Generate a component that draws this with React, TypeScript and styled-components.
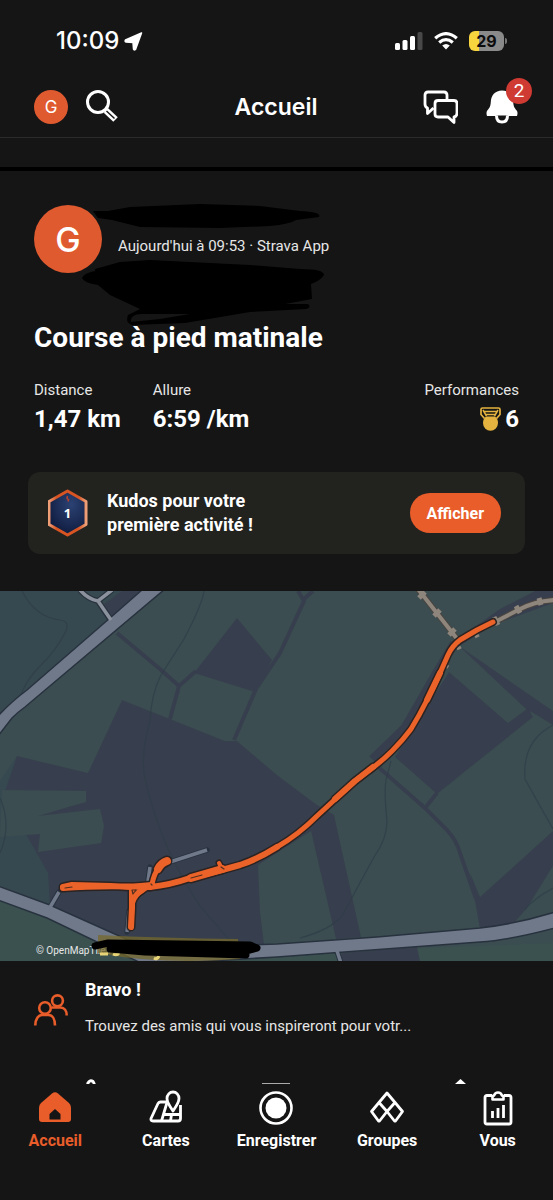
import React from 'react';
import styled, { createGlobalStyle } from 'styled-components';

const c = {
  bg: '#151515',
  black: '#000',
  white: '#fff',
  soft: '#e6e6e6',
  orange: '#e85d2a',
  avatar: '#e05a30',
  card: '#22221f',
  red: '#cf3a33',
  gold: '#e3b23f',
  field: '#3b4d50',
  fieldBlue: '#374950',
  land: '#373f4e',
  road: '#6f798a',
  casing: '#28323f',
  trail: '#8e867d',
};

const GlobalStyle = createGlobalStyle`
  *, *::before, *::after { box-sizing: border-box; }
  body { margin: 0; background: ${c.bg}; color: ${c.white}; font-family: Roboto, "Liberation Sans", sans-serif; }
  h1, h2, h3, p, dl, dt, dd { margin: 0; font-weight: inherit; font-size: inherit; }
  button { font: inherit; color: inherit; background: none; border: 0; padding: 0; cursor: pointer; }
  a { color: inherit; text-decoration: none; }
  svg { display: block; flex: none; }
`;

const Page = styled.div`
  min-height: 100vh;
  display: flex;
  flex-direction: column;
  background: ${c.bg};
`;

const StatusBar = styled.div`
  display: flex;
  align-items: center;
  justify-content: space-between;
  height: 82px;
  padding: 0 46px 0 56px;
  font-family: Inter, sans-serif;
`;

const Clock = styled.div`
  display: flex;
  align-items: center;
  gap: 5px;
  font-size: 24px;
  line-height: 32px;
  font-weight: 500;
`;

const Indicators = styled.div`
  display: flex;
  align-items: center;
  gap: 11px;
`;

const Battery = styled.div`
  position: relative;
  display: flex;
  align-items: center;
  justify-content: center;
  width: 35px;
  height: 20px;
  margin-right: 3px;
  border-radius: 6px;
  background: linear-gradient(to right, #f6d53f 30%, #8a8a8a 30%);
  color: #0c0c0c;
  font-size: 16px;
  line-height: 20px;
  font-weight: 700;
  &::after {
    content: '';
    position: absolute;
    right: -3px;
    top: 7px;
    width: 2px;
    height: 6px;
    border-radius: 0 2px 2px 0;
    background: #777;
  }
`;

const TopBar = styled.header`
  display: grid;
  grid-template-columns: 1fr auto 1fr;
  align-items: center;
  height: 56px;
  padding: 0 35px 6px 34px;
  border-bottom: 1px solid #2b2b2b;
`;

const BarSide = styled.div<{ $end?: boolean; $gap: number }>`
  display: flex;
  align-items: center;
  justify-content: ${(p) => (p.$end ? 'flex-end' : 'flex-start')};
  gap: ${(p) => p.$gap}px;
`;

const BarTitle = styled.h1`
  font-family: Inter, sans-serif;
  font-size: 23px;
  line-height: 32px;
  font-weight: 600;
`;

const Avatar = styled.span<{ $size: number; $font: number; $weight: number }>`
  display: flex;
  align-items: center;
  justify-content: center;
  flex: none;
  width: ${(p) => p.$size}px;
  height: ${(p) => p.$size}px;
  border-radius: 50%;
  background: ${c.avatar};
  font-family: Inter, sans-serif;
  font-size: ${(p) => p.$font}px;
  font-weight: ${(p) => p.$weight};
`;

const IconButton = styled.button`
  position: relative;
  display: flex;
`;

const Badge = styled.span`
  position: absolute;
  top: -12px;
  right: -14px;
  width: 26px;
  height: 26px;
  border-radius: 50%;
  background: ${c.red};
  font-size: 19px;
  line-height: 26px;
  text-align: center;
`;

const Divider = styled.div`
  margin-top: 29px;
  height: 4px;
  background: ${c.black};
`;

const Post = styled.article`
  position: relative;
  display: flex;
  flex-direction: column;
`;

const Author = styled.div`
  display: flex;
  align-items: center;
  gap: 16px;
  padding: 34px 34px 0;
`;

const Meta = styled.p`
  padding-top: 13px;
  color: ${c.soft};
  font-size: 15px;
  line-height: 20px;
`;

const Ink = styled.svg`
  position: absolute;
  top: 0;
  left: 0;
  pointer-events: none;
`;

const Title = styled.h2`
  position: relative;
  z-index: 1;
  margin: 47px 34px 0;
  font-size: 28px;
  line-height: 36px;
  font-weight: 700;
`;

const Stats = styled.dl`
  display: flex;
  gap: 32px;
  margin: 24px 34px 0;
`;

const Stat = styled.div<{ $end?: boolean }>`
  display: flex;
  flex-direction: column;
  gap: 3px;
  align-items: ${(p) => (p.$end ? 'flex-end' : 'flex-start')};
  margin-left: ${(p) => (p.$end ? 'auto' : '0')};
`;

const StatLabel = styled.dt`
  color: ${c.soft};
  font-size: 15px;
  line-height: 20px;
`;

const StatValue = styled.dd`
  display: flex;
  align-items: center;
  gap: 4px;
  font-size: 24px;
  line-height: 32px;
  font-weight: 700;
`;

const Kudos = styled.section`
  display: flex;
  align-items: center;
  gap: 18px;
  min-height: 82px;
  margin: 37px 28px;
  padding: 0 24px 0 20px;
  border-radius: 12px;
  background: ${c.card};
`;

const KudosText = styled.p`
  flex: 1;
  max-width: 180px;
  font-size: 18px;
  line-height: 24px;
  font-weight: 700;
`;

const Pill = styled.button`
  && {
    margin-left: auto;
    height: 40px;
    padding: 0 17px;
    border-radius: 20px;
    background: ${c.orange};
    font-size: 16px;
    font-weight: 700;
  }
`;

const MapFrame = styled.figure`
  position: relative;
  height: 370px;
  margin: 0;
  overflow: hidden;
  background: ${c.field};
`;

const Credit = styled.figcaption`
  position: absolute;
  left: 36px;
  bottom: 2px;
  color: #e8e8e8;
  font-size: 10px;
  line-height: 16px;
`;

const Invite = styled.section`
  display: flex;
  gap: 17px;
  padding: 18px 34px 0;
`;

const InviteIcon = styled.div`
  padding-top: 15px;
`;

const InviteText = styled.div`
  display: flex;
  flex-direction: column;
  gap: 14px;
  min-width: 0;
  font-size: 15px;
  line-height: 22px;
`;

const InviteTitle = styled.h3`
  font-weight: 700;
  font-size: 18px;
`;

const InviteBody = styled.p`
  color: ${c.soft};
`;

const Actions = styled.div`
  display: grid;
  grid-template-columns: repeat(3, 1fr);
  justify-items: center;
  height: 5px;
  margin-top: 42px;
  overflow: hidden;
`;

const TabBar = styled.nav`
  display: grid;
  grid-template-columns: repeat(5, 1fr);
  flex: 1;
  min-height: 117px;
  padding-top: 6px;
`;

const Tab = styled.a<{ $active?: boolean }>`
  display: flex;
  flex-direction: column;
  align-items: center;
  gap: 5px;
  && { color: ${(p) => (p.$active ? c.orange : c.white)}; }
  font-size: 16px;
  line-height: 20px;
  font-weight: 700;
`;

const Search = () => (
  <svg width="34" height="34" viewBox="0 0 34 34" fill="none" stroke="#fff" strokeWidth="3" aria-hidden>
    <circle cx="12" cy="12" r="10.5" />
    <path d="M20 20.500 L29.500 29.500" strokeWidth="6.500" />
    <path d="M20 20.500 L29 29" strokeWidth="4" strokeLinejoin="round" />
    <path d="M20.500 21 L28.500 28.500" stroke={c.bg} strokeWidth="1.400" />
  </svg>
);

const Chat = () => (
  <svg width="35" height="34" viewBox="0 0 35 34" fill="none" stroke="#fff" strokeWidth="2.800" strokeLinejoin="round" aria-hidden>
    <path d="M24 9.500 V5 Q24 2 21 2 H5 Q2 2 2 5 V14 Q2 17 4.500 18 V23.500 L10.500 18" />
    <path d="M15 10.500 H31 Q34 10.500 34 13.500 V23 Q34 26.500 31 27 V32.500 L25 27 H15 Q12 27 12 24 V13.500 Q12 10.500 15 10.500 Z" />
  </svg>
);

const Bell = () => (
  <svg width="32" height="34" viewBox="0 0 32 34" aria-hidden>
    <path d="M16 0.500 C9 0.500 5 5.500 4.800 12 C4.500 17 3 18.500 1 21 Q0 23 1 26 H31 Q32 23 31 21 C29 18.500 27.500 17 27.200 12 C27 5.500 23 0.500 16 0.500 Z" fill="#fff" />
    <path d="M10.500 25.500 C10.500 30 13 32 16 32 C19 32 21.500 30 21.500 25.500" fill="#151515" stroke="#fff" strokeWidth="3" />
  </svg>
);

const Medal = () => (
  <svg width="21" height="24" viewBox="0 0 21 24" fill="none" stroke={c.gold} aria-hidden>
    <path d="M4.500 11.500 L1 7.500 V2.500 Q1 1 2.500 1 H18.500 Q20 1 20 2.500 V7.500 L16.500 11.500" strokeWidth="1.700" />
    <path d="M3 3 L6.500 9 M18 3 L14.500 9 M4 4.500 H17 M6 7.500 H15" strokeWidth="1.500" />
    <path d="M6 9.500 H15 C17 11 18 13 18 16 A7.500 7.800 0 0 1 3 16 C3 13 4 11 6 9.500 Z" fill={c.gold} stroke="none" />
  </svg>
);

const HexBadge = () => (
  <svg width="41" height="48" viewBox="0 0 41 48" role="img" aria-label="1">
    <defs>
      <linearGradient id="hexRim" x1="0" x2="1" y1="0" y2="0">
        <stop offset="0" stopColor="#f0a078" />
        <stop offset=".2" stopColor="#d85523" />
        <stop offset=".8" stopColor="#d85523" />
        <stop offset="1" stopColor="#f0a078" />
      </linearGradient>
      <radialGradient id="hexFill" cx=".6" cy=".3" r=".7">
        <stop offset="0" stopColor="#2b4273" />
        <stop offset="1" stopColor="#101c40" />
      </radialGradient>
    </defs>
    <path d="M19.500 2 L38 12.500 V35.500 L19.500 46 L1 35.500 V12.500 Z" fill="url(#hexFill)" stroke="url(#hexRim)" strokeWidth="3" strokeLinejoin="round" />
    <path d="M19.500 7 L19 9.500 L20.500 10.500 L20 12.500" fill="none" stroke="#b8402b" strokeWidth="1.500" />
    <text x="19.500" y="29" fill="#fff" fontSize="13" fontWeight="700" textAnchor="middle" fontFamily="Noto Sans, sans-serif">1</text>
  </svg>
);

const Friends = () => (
  <svg width="34" height="32" viewBox="0 0 34 32" fill="none" stroke={c.orange} strokeWidth="2.600" aria-hidden>
    <circle cx="11" cy="14" r="5.800" />
    <path d="M1.300 31.500 C1.300 25 4.500 21 8 21 H14.500 C18.500 21 21 25 21 31.500" />
    <circle cx="23.500" cy="6.800" r="5.400" />
    <path d="M17.500 13.500 H26.500 C30.500 13.500 32.700 17 32.700 21.500" />
  </svg>
);

const Landscape = () => (
  <svg width="100%" height="370" viewBox="0 0 553 370" preserveAspectRatio="xMidYMid slice" role="img" aria-label="Parcours">
    <rect width="553" height="370" fill={c.field} />
    <path d="M0 0 H143 L27 99 L0 124 Z" fill={c.fieldBlue} />
    <path d="M0 190 L17 165 L60 178 L50 315 L0 300 Z" fill={c.fieldBlue} />
    <g fill={c.land}>
      <path d="M100 16 L122 0 H146 L110 28 Z" />
      <path d="M122 109 L170 128 L225 150 L237 150 L277 184 L317 214 L334 224 L361 346 L336 348 L311 240 L258 274 L260 320 L264 354 L140 354 L50 315 L48 282 L27 245 L5 200 L17 165 L88 182 Z" />
      <path d="M237 27 L272 69 L255 101 L194 82 Z" />
      <path d="M449 81 L508 132 L528 117 L533 126 L437 203 L395 166 Z" />
      <path d="M480 306 L553 240 V275 L527 317 L514 332 L480 338 L470 282 Z" />
      <path d="M452 52 L500 18 L535 0 H553 V12 L493 34 L458 56 Z" />
      <path d="M459 55 L553 120 V134 L525 117 Z" />
    </g>
    <g fill="none" stroke={c.land} strokeWidth="4">
      <path d="M117 42 L160 78 L179 95 L170 128 M179 95 L196 80 M256 98 L234 149 M256 98 L280 62 L304 10 L298 0 M304 8 L313 0" />
      <path d="M376 174 L425 217 L437 202 M425 217 L447 239 Q457 250 460 262 L476 308" />
      <path d="M454 52 L436 82 L405 136 L372 168" strokeWidth="8" />
    </g>
    <path d="M2 199 L86 200 V211 L68 216 L38 225 L100 218 L104 235 L101 252 L38 261 L40 243 L0 246 Z" fill={c.field} />
    <g fill="none" stroke="#2f3d48" strokeWidth="1.200" opacity=".7">
      <path d="M22 0 Q35 26 60 29 Q70 30 66 40 Q56 60 40 75 Q26 89 20 106" />
      <path d="M204 0 Q202 14 184 48 L161 84 Q151 104 150 130 Q140 165 145 188 Q150 210 160 238 Q172 272 200 315 L232 352" />
      <path d="M386 189 Q384 200 387 230 Q387 248 374 266 L342 325 Q330 339 300 347 M391 170 L386 189" />
      <path d="M553 134 Q522 150 525 188 L540 215 L553 238 M0 207 Q12 234 0 262 M525 318 Q535 307 553 297" />
    </g>
    <path d="M0 305 L135 368 L553 352 V370 H0 Z" fill="#3a5150" />
    <path d="M342 362 L417 356 L420 370 H337 Z" fill={c.land} />

    <g fill="none" strokeLinejoin="round">
      <path d="M80 -1 Q88 8 98 10 L112 -1 M98 10 L112 31" stroke={c.casing} strokeWidth="6" />
      <path d="M59 301 L48 320 M170 271 L207 259 M150 276 L148 290 M129 320 L127 341 M337 360 L341 372" stroke={c.casing} strokeWidth="5.500" strokeLinecap="round" />
    </g>
    <g fill={c.road} stroke={c.casing} strokeWidth="1.500">
      <path d="M143 -2 L110 27 L27 99 Q12 110 -2 125 V145 L12 127 Q18 121 25 116 L165 -2 Z" />
      <path d="M-2 295 L50 314 L137 353 L168 357 L277 353 L377 346 L480 337 Q516 333 555 321 V337 Q510 349 480 351 L277 366 L160 373 H143 L47 327 L-2 309 Z" />
    </g>
    <g fill="none" stroke={c.road} strokeWidth="3.500">
      <path d="M80 -1 Q88 8 98 10 L112 -1 M98 10 L111 29" stroke="#8b929d" strokeWidth="3.500" />
      <path d="M59 301 L49 318 M170 271 L207 259 M150 276 L148 290 M129 320 L127 341 M337 360 L341 372" />
    </g>

    <g fill="none" stroke={c.trail}>
      <path d="M418 -2 L458 49 M493 32 L518 19 Q535 10 555 9" strokeWidth="6" stroke="#4a443f" />
      <path d="M418 -2 L458 49 M493 32 L518 19 Q535 10 555 9" strokeWidth="4" />
      <path d="M419 7 L425 1 M434 25 L440 19 M449 44 L455 38 M498 34 L494 26 M520 22 L516 15 M541 14 L539 7" strokeWidth="5" />
      <path d="M457 58 L461 56 M446 77 L448 74 M475 46 L479 44" strokeWidth="3" />
    </g>

    <g fill="none" strokeLinecap="round" strokeLinejoin="round">
      {[
        { color: '#2b2322', extra: 3 },
        { color: '#ec632a', extra: 0 },
      ].map(({ color, extra }) => (
        <g key={color} stroke={color}>
          <path d="M493 31 L477 39 L460 49 Q452 55 448 64 L440 82 Q434 96 427 109 Q419 125 411 138 Q403 149 392 160 Q384 168 375 175 L355 190 L317 225 Q298 244 277 256" strokeWidth={5 + extra} />
          <path d="M440 82 L427 109" strokeWidth={6 + extra} />
          <path d="M373 176 L355 190 L335 208 M277 256 Q258 268 240 274 L222 279 L190 287 Q170 294 150 296" strokeWidth={6 + extra} />
          <path d="M222 278 L191 287" strokeWidth={8 + extra} />
          <path d="M150 296 Q100 294 63 297 M63 296 L72 294 L110 295 L130 296 L152 294" strokeWidth={6 + extra} />
          <path d="M152 293 Q154 283 159 276 M152 293 Q140 301 136 304" strokeWidth={5 + extra} />
          <path d="M158 278 Q161 272 167 270" strokeWidth={8 + extra} />
          <path d="M132 300 V317 L131 336 M142 299 Q134 304 132 312" strokeWidth={6 + extra} />
          <path d="M219 272 L221 276 L226 278" strokeWidth={4 + extra} />
        </g>
      ))}
      <path d="M65 297 L72 296 M191 287 L202 284 M151 293 L152 294 M132 299 L136 299 L133 303 Z M221 276 L224 278" stroke="#51301f" strokeWidth="1.200" />
    </g>
  </svg>
);

const Smudge = () => (
  <Ink width="280" height="370" viewBox="0 0 280 370" aria-hidden>
    <path d="M98 344 Q160 347 238 348 L240 368 Q160 374 98 362 Z" fill="#75682b" opacity=".75" />
    <path d="M100 363 H108 M113 363 Q117 365 119 362 M154 367 Q157 369 159 365" stroke="#e7d476" strokeWidth="3" fill="none" />
    <path d="M95 355 L108 352 L250 354 L257 357 L246 360 L110 358 L145 361 L246 364" fill="none" stroke="#000" strokeWidth="7" strokeLinecap="round" strokeLinejoin="round" />
  </Ink>
);

const tabs = [
  {
    label: 'Accueil',
    icon: (
      <svg width="34" height="36" viewBox="0 0 34 36" aria-hidden>
        <path d="M14 3.500 Q17 1 20 3.500 L31 13 Q33 15 33 17.500 V29 Q33 32 30 32 H4 Q1 32 1 29 V17.500 Q1 15 3 13 Z" fill={c.orange} />
        <path d="M17 19 L22.500 24 V29.500 H11.500 V24 Z" fill={c.bg} />
      </svg>
    ),
  },
  {
    label: 'Cartes',
    icon: (
      <svg width="34" height="36" viewBox="0 0 34 36" fill="none" stroke="#fff" strokeWidth="2.800" strokeLinejoin="round" aria-hidden>
        <path d="M18 12 H11.500 Q10 12 9 13.500 L2 28.500 Q1.500 31 4 31 H29 Q31.500 31 31.500 28.500 V15" />
        <path d="M18 12.500 L12.500 31 M15 24.500 H31 M22.500 24.500 L21.500 31" />
        <path d="M24 21 C20.500 16 18 12.500 18 8.500 A6 6.500 0 0 1 30 8.500 C30 12.500 27.500 16 24 21 Z" fill={c.bg} />
      </svg>
    ),
  },
  {
    label: 'Enregistrer',
    icon: (
      <svg width="36" height="36" viewBox="0 0 36 36" aria-hidden>
        <circle cx="18" cy="18" r="15.500" fill="none" stroke="#fff" strokeWidth="2.600" />
        <circle cx="18" cy="18" r="10.500" fill="#fff" />
      </svg>
    ),
  },
  {
    label: 'Groupes',
    icon: (
      <svg width="36" height="36" viewBox="0 0 36 36" fill="none" stroke="#fff" strokeWidth="2.800" strokeLinejoin="round" aria-hidden>
        <path d="M18 3 L26 12.500 L33.500 21.500 L26.500 31 H25.500 L18 21.500 L10.500 31 H9.500 L2.500 21.500 L10 12.500 Z" />
        <path d="M10 12.500 L18 21.500 L26 12.500" />
      </svg>
    ),
  },
  {
    label: 'Vous',
    icon: (
      <svg width="30" height="36" viewBox="0 0 30 36" fill="none" stroke="#fff" strokeWidth="2.800" strokeLinejoin="round" aria-hidden>
        <path d="M9 5.500 H4 Q2 5.500 2 7.500 V32 Q2 34 4 34 H26 Q28 34 28 32 V7.500 Q28 5.500 26 5.500 H21" />
        <path d="M9.500 9.500 V7 Q9.500 5.500 11 5.500 Q12 2.500 15 2.500 Q18 2.500 19 5.500 Q20.500 5.500 20.500 7 V9.500 Z" strokeWidth="2.600" />
        <path d="M9.500 21 V28 M15 18 V28 M20.500 15 V28" />
      </svg>
    ),
  },
];

export default function App() {
  return (
    <Page>
      <GlobalStyle />
      <StatusBar>
        <Clock>
          10:09
          <svg width="19" height="19" viewBox="0 0 19 19" aria-hidden>
            <path d="M17.500 1 L1.500 8 Q0.500 9.500 2 10 L9 10.500 L9.500 17 Q10 18.500 11.500 17.500 Z" fill="#fff" stroke="#fff" strokeWidth="1.500" strokeLinejoin="round" />
          </svg>
        </Clock>
        <Indicators>
          <svg width="28" height="18" viewBox="0 0 28 18" aria-hidden>
            <rect x="0" y="11" width="5" height="7" rx="1.500" fill="#fff" />
            <rect x="7.500" y="8" width="5" height="10" rx="1.500" fill="#fff" />
            <rect x="15" y="4" width="5" height="14" rx="1.500" fill="#fff" />
            <rect x="22.500" y="0" width="5" height="18" rx="1.500" fill="#484848" />
          </svg>
          <svg width="24" height="18" viewBox="0 0 24 18" fill="none" stroke="#fff" strokeWidth="3.200" aria-hidden>
            <path d="M1.200 6.300 Q12 -3 22.800 6.300" />
            <path d="M5.200 10.500 Q12 4.600 18.800 10.500" />
            <path d="M12 17.500 L8.200 13.500 Q12 10.500 15.800 13.500 Z" fill="#fff" stroke="none" />
          </svg>
          <Battery>29</Battery>
        </Indicators>
      </StatusBar>

      <TopBar>
        <BarSide $gap={18}>
          <Avatar $size={34} $font={17} $weight={400}>G</Avatar>
          <IconButton aria-label="Rechercher"><Search /></IconButton>
        </BarSide>
        <BarTitle>Accueil</BarTitle>
        <BarSide $end $gap={28}>
          <IconButton aria-label="Messages"><Chat /></IconButton>
          <IconButton aria-label="Notifications">
            <Bell />
            <Badge>2</Badge>
          </IconButton>
        </BarSide>
      </TopBar>
      <Divider />

      <Post>
        <Author>
          <Avatar $size={68} $font={34} $weight={500}>G</Avatar>
          <Meta>Aujourd'hui à 09:53 · Strava App</Meta>
        </Author>
        <Ink width="360" height="160" viewBox="0 0 360 160" aria-hidden>
          <path d="M93 40 H108 L130 36 L200 33 L260 35 L300 40 Q322 41 319 46 L296 49 Q290 53 270 55 L220 57 L140 56 L112 49 L98 47 Z" />
          <path d="M95 98 L120 91 L150 89 L250 94 L300 98 Q324 98 324 104 Q320 110 311 113 L312 128 L285 133 L308 133 Q312 136 306 138 L250 141 L185 152 L132 154 Q125 152 128 144 L140 138 L110 124 L98 114 Q84 112 82 107 Q84 102 95 100 Z" />
          <path d="M131 151 Q130 143 142 143 L190 143 L160 148 Z" fill={c.bg} />
        </Ink>
        <Title>Course à pied matinale</Title>
        <Stats>
          <Stat>
            <StatLabel>Distance</StatLabel>
            <StatValue>1,47 km</StatValue>
          </Stat>
          <Stat>
            <StatLabel>Allure</StatLabel>
            <StatValue>6:59 /km</StatValue>
          </Stat>
          <Stat $end>
            <StatLabel>Performances</StatLabel>
            <StatValue><Medal />6</StatValue>
          </Stat>
        </Stats>
        <Kudos>
          <HexBadge />
          <KudosText>Kudos pour votre première activité !</KudosText>
          <Pill>Afficher</Pill>
        </Kudos>
        <MapFrame>
          <Landscape />
          <Credit>© OpenMapTiles</Credit>
          <Smudge />
        </MapFrame>
        <Invite>
          <InviteIcon><Friends /></InviteIcon>
          <InviteText>
            <InviteTitle>Bravo !</InviteTitle>
            <InviteBody>Trouvez des amis qui vous inspireront pour votr...</InviteBody>
          </InviteText>
        </Invite>
        <Actions>
          <svg width="30" height="30" viewBox="0 0 30 30" fill="none" stroke="#fff" strokeWidth="3" aria-hidden>
            <path d="M9 12 L11 4 Q13 0.500 16 2.500 Q17.500 4 18 10" />
          </svg>
          <svg width="30" height="30" viewBox="0 0 30 30" aria-hidden>
            <rect x="1" y="4" width="28" height="1" fill="#aaa" />
          </svg>
          <svg width="30" height="30" viewBox="0 0 30 30" aria-hidden>
            <path d="M14.500 0 L20 5 H9 Z" fill="#fff" />
          </svg>
        </Actions>
      </Post>

      <TabBar>
        {tabs.map(({ label, icon }, i) => (
          <Tab key={label} href="#" $active={i === 0} aria-current={i === 0 ? 'page' : undefined}>
            {icon}
            {label}
          </Tab>
        ))}
      </TabBar>
    </Page>
  );
}
